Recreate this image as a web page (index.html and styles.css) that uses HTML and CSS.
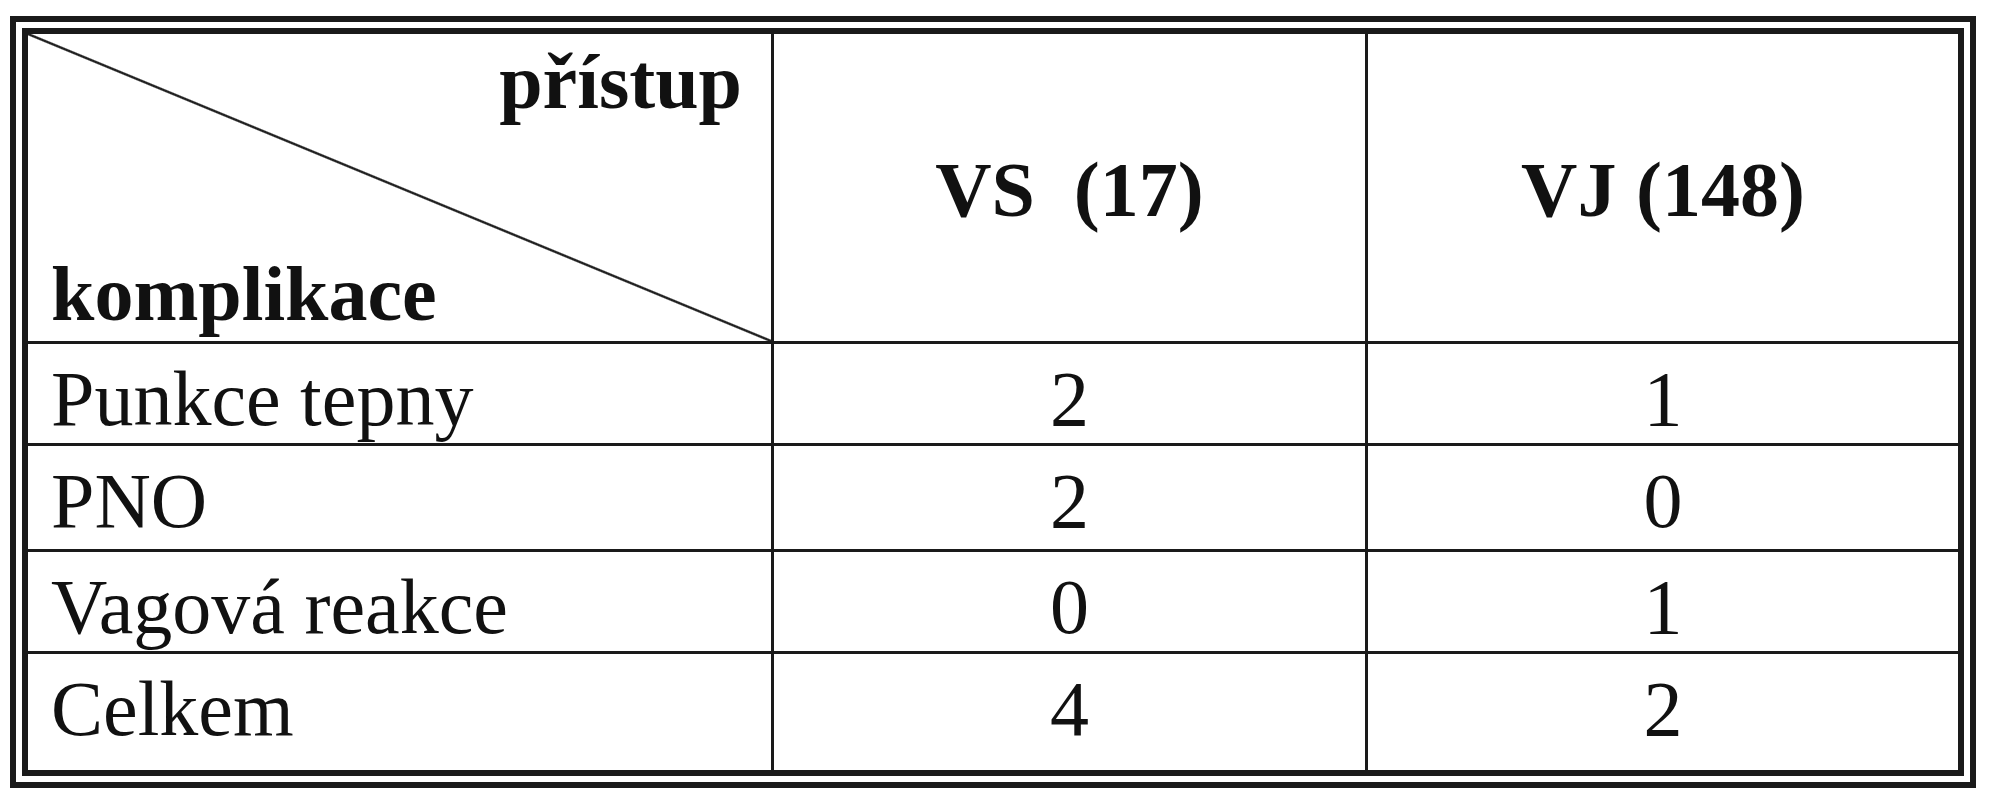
FILE: index.html
```html
<!DOCTYPE html>
<html lang="cs">
<head>
<meta charset="utf-8">
<title>Komplikace</title>
<link rel="stylesheet" href="styles.css">
</head>
<body>
<div class="frame">
  <table class="grid">
    <colgroup>
      <col class="c1"><col class="c2"><col class="c3">
    </colgroup>
    <tr class="head">
      <td class="corner">
        <div class="corner-box">
          <div class="top-label">přístup</div>
          <div class="bottom-label">komplikace</div>
        </div>
      </td>
      <td class="hcell">VS&nbsp; (17)</td>
      <td class="hcell last">VJ (148)</td>
    </tr>
    <tr class="r1">
      <td class="label">Punkce tepny</td>
      <td class="num">2</td>
      <td class="num last">1</td>
    </tr>
    <tr class="r2">
      <td class="label">PNO</td>
      <td class="num">2</td>
      <td class="num last">0</td>
    </tr>
    <tr class="r3">
      <td class="label">Vagová reakce</td>
      <td class="num">0</td>
      <td class="num last">1</td>
    </tr>
    <tr class="r4 final">
      <td class="label">Celkem</td>
      <td class="num">4</td>
      <td class="num last">2</td>
    </tr>
  </table>
</div>
</body>
</html>
```
FILE: styles.css
```css
html, body {
  margin: 0;
  padding: 0;
  background: #ffffff;
}
body {
  padding: 16px 0 0 10px;
  font-family: "Liberation Serif", "Times New Roman", serif;
  color: #111111;
}
.frame {
  box-sizing: border-box;
  width: 1966px;
  border: 6px solid #1a1a1a;
  padding: 6px;
}
.grid {
  border-collapse: separate;
  border-spacing: 0;
  table-layout: fixed;
  width: 1942px;
  border: 6px solid #1a1a1a;
  font-size: 78px;
  line-height: 86px;
}
.c1 { width: 746px; }
.c2 { width: 594px; }
.c3 { width: 590px; }
.grid td {
  box-sizing: border-box;
  padding: 0;
  border-right: 3px solid #1a1a1a;
  border-bottom: 3px solid #1a1a1a;
  vertical-align: top;
  white-space: nowrap;
}
.grid td.last { border-right: none; }
.grid tr.final td { border-bottom: none; }

.head { height: 310px; }
.r1 { height: 102px; }
.r2 { height: 106px; }
.r3 { height: 102px; }
.r4 { height: 116px; }

.corner {
  background: linear-gradient(to top right,
    transparent calc(50% - 1.8px),
    #222222 calc(50% - 0.6px),
    #222222 calc(50% + 0.6px),
    transparent calc(50% + 1.8px));
}
.corner-box {
  box-sizing: border-box;
  height: 307px;
  display: flex;
  flex-direction: column;
  justify-content: space-between;
  padding: 5px 29px 4px 23px;
  font-weight: bold;
}
.top-label { text-align: right; }
.bottom-label { text-align: left; }

.hcell {
  font-weight: bold;
  text-align: center;
  padding-top: 113px !important;
}
.label {
  padding: 12px 0 0 23px !important;
}
.num {
  text-align: center;
  padding-top: 12px !important;
}
```
